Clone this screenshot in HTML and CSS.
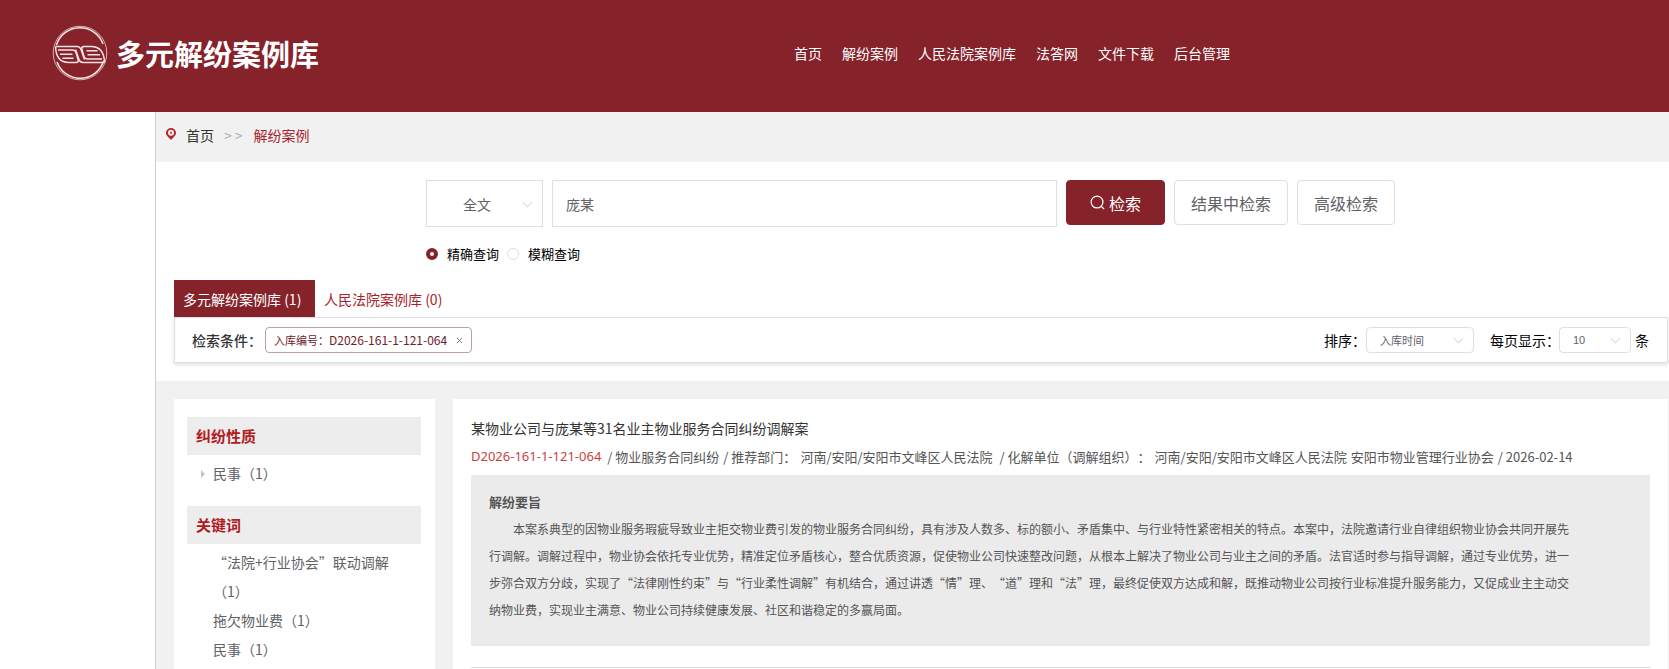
FILE: index.html
```html
<!DOCTYPE html>
<html lang="zh-CN">
<head>
<meta charset="utf-8">
<title>多元解纷案例库</title>
<link rel="stylesheet" href="styles.css">
</head>
<body>
<header class="site-header">
  <a class="brand" href="#">
    <svg class="brand-logo" viewBox="0 0 56 56" fill="none" stroke="#f7e4e4" aria-hidden="true">
      <circle cx="28" cy="28" r="26.800" stroke-width=".9" opacity=".8"/>
      <path d="M4.500 20A24.500 24.500 0 0 1 51 19M5 37A24.500 24.500 0 0 0 51.500 36" stroke-width="1.600"/>
      <g id="wing" stroke-width="1.500">
        <path d="M3.500 21.500H25Q28 21.500 29 24.500L32.500 34.500"/>
        <path d="M3.500 21.500Q4 37.500 17 37.500H24Q27 37.500 26 34.500L24 27.500Q23 25 20.500 25H6"/>
        <path d="M8 29.200H20.500M10.500 33.300H21.500"/>
      </g>
      <g stroke-width="1.500" transform="rotate(180 28 29.500)">
        <path d="M3.500 21.500H25Q28 21.500 29 24.500L32.500 34.500"/>
        <path d="M3.500 21.500Q4 37.500 17 37.500H24Q27 37.500 26 34.500L24 27.500Q23 25 20.500 25H6"/>
        <path d="M8 29.200H20.500M10.500 33.300H21.500"/>
      </g>
    </svg>
    <span class="brand-name">多元解纷案例库</span>
  </a>
  <nav class="main-nav">
    <a href="#">首页</a>
    <a href="#">解纷案例</a>
    <a href="#">人民法院案例库</a>
    <a href="#">法答网</a>
    <a href="#">文件下载</a>
    <a href="#">后台管理</a>
  </nav>
</header>

<main class="page">
  <nav class="breadcrumb" aria-label="面包屑">
    <svg class="pin" viewBox="0 0 10 12" aria-hidden="true"><path fill="#b8242a" fill-rule="evenodd" d="M5 0a5 5 0 0 1 5 5c0 2.700-3 4.600-5 7C3 9.600 0 7.700 0 5a5 5 0 0 1 5-5zm0 1.800a3 3 0 1 0 0 6 3 3 0 0 0 0-6z"/><circle cx="5" cy="4.800" r="1" fill="#b8242a"/></svg>
    <a href="#">首页</a>
    <span class="crumb-sep">&gt;&gt;</span>
    <a class="crumb-current" href="#">解纷案例</a>
  </nav>

  <section class="search-area">
    <form class="search-form">
      <div class="search-row">
        <span class="select-wrap scope">
          <select aria-label="检索范围"><option>全文</option></select>
          <svg class="chevron" viewBox="0 0 12 8" aria-hidden="true"><path d="M1 1l5 5 5-5"/></svg>
        </span>
        <input class="keyword" type="text" value="庞某" aria-label="关键字">
        <button class="btn btn-primary" type="button">
          <svg class="search-icon" viewBox="0 0 16 16" fill="none" stroke="#fff" stroke-width="1.300" aria-hidden="true"><circle cx="7.500" cy="7.500" r="6.300"/><path d="M11.800 12L15 15"/></svg>
          检索
        </button>
        <button class="btn" type="button">结果中检索</button>
        <button class="btn" type="button">高级检索</button>
      </div>
      <div class="mode-row">
        <label><input type="radio" name="mode" checked>精确查询</label>
        <label><input type="radio" name="mode">模糊查询</label>
      </div>
    </form>

    <div class="tabs">
      <button class="tab tab-active" type="button">多元解纷案例库 (1)</button>
      <button class="tab" type="button">人民法院案例库 (0)</button>
    </div>
    <div class="filter-bar">
      <span class="filter-label">检索条件：</span>
      <span class="tag">入库编号：<span class="tag-code">D2026-161-1-121-064</span>
        <button class="tag-close" type="button" aria-label="移除条件"><svg viewBox="0 0 8 8" aria-hidden="true"><path d="M1 1l6 6M7 1L1 7"/></svg></button>
      </span>
      <div class="sort-tools">
        <label for="sort">排序：</label>
        <span class="select-wrap small sort">
          <select id="sort"><option>入库时间</option></select>
          <svg class="chevron" viewBox="0 0 12 8" aria-hidden="true"><path d="M1 1l5 5 5-5"/></svg>
        </span>
        <label class="size-label" for="size">每页显示：</label>
        <span class="select-wrap small size">
          <select id="size"><option>10</option></select>
          <svg class="chevron" viewBox="0 0 12 8" aria-hidden="true"><path d="M1 1l5 5 5-5"/></svg>
        </span>
        <span class="unit">条</span>
      </div>
    </div>
  </section>

  <div class="results">
    <aside class="facets">
      <section>
        <h2>纠纷性质</h2>
        <ul>
          <li class="expandable"><a href="#">民事（1）</a></li>
        </ul>
      </section>
      <section>
        <h2>关键词</h2>
        <ul>
          <li><a href="#">“法院+行业协会”联动调解（1）</a></li>
          <li><a href="#">拖欠物业费（1）</a></li>
          <li><a href="#">民事（1）</a></li>
        </ul>
      </section>
    </aside>

    <section class="case-list">
      <article class="case">
        <h3><a href="#">某物业公司与庞某等31名业主物业服务合同纠纷调解案</a></h3>
        <p class="meta">
          <span class="case-no">D2026-161-1-121-064</span>
          <span>/ 物业服务合同纠纷</span>
          <span>/ 推荐部门：</span>
          <span class="org">河南/安阳/安阳市文峰区人民法院</span>
          <span>/ 化解单位（调解组织）：</span>
          <span>河南/安阳/安阳市文峰区人民法院</span>
          <span>安阳市物业管理行业协会</span>
          <span>/ 2026-02-14</span>
        </p>
        <div class="summary">
          <h4>解纷要旨</h4>
          <p>本案系典型的因物业服务瑕疵导致业主拒交物业费引发的物业服务合同纠纷，具有涉及人数多、标的额小、矛盾集中、与行业特性紧密相关的特点。本案中，法院邀请行业自律组织物业协会共同开展先行调解。调解过程中，物业协会依托专业优势，精准定位矛盾核心，整合优质资源，促使物业公司快速整改问题，从根本上解决了物业公司与业主之间的矛盾。法官适时参与指导调解，通过专业优势，进一步弥合双方分歧，实现了“法律刚性约束”与“行业柔性调解”有机结合，通过讲透“情”理、“道”理和“法”理，最终促使双方达成和解，既推动物业公司按行业标准提升服务能力，又促成业主主动交纳物业费，实现业主满意、物业公司持续健康发展、社区和谐稳定的多赢局面。</p>
        </div>
      </article>
    </section>
  </div>
</main>
</body>
</html>
```

FILE: styles.css
```css
* { box-sizing: border-box; }

body {
  margin: 0;
  min-height: 100vh;
  display: flex;
  flex-direction: column;
  background: #fff;
  color: #333;
  font: 14px/20px "Noto Sans CJK SC", "Noto Sans", sans-serif;
  text-spacing-trim: space-all;
}

a { color: inherit; text-decoration: none; }
h2, h3, h4, p, ul { margin: 0; padding: 0; }
ul { list-style: none; }
button, input, select { font-family: inherit; margin: 0; }

/* Header */
.site-header {
  display: flex;
  align-items: center;
  height: 112px;
  padding: 0 52px 6px;
  background: #85222a;
  color: #fff;
}
.brand { display: flex; align-items: center; gap: 8px; flex: 0 0 742px; }
.brand-logo { width: 56px; height: 56px; }
.brand-name { font-size: 29px; line-height: 40px; font-weight: 700; }
.main-nav { display: flex; gap: 20px; white-space: nowrap; }

/* Page frame */
.page {
  flex: 1;
  display: flex;
  flex-direction: column;
  margin-left: 155px;
  border-left: 1px solid #d0d0d0;
  background: #f1f1f1;
}

.breadcrumb {
  display: flex;
  align-items: center;
  height: 50px;
  padding: 0 10px 4px;
}
.pin { width: 10px; height: 12px; margin: 0 10px 2px 0; }
.crumb-sep { margin: 0 8px 0 10px; color: #aaa; letter-spacing: 3px; }
.crumb-current { color: #a8232b; }

/* Search */
.search-area { padding: 18px 0 18px 18px; background: #fff; }
.search-form { padding-left: 252px; }
.search-row { display: flex; align-items: flex-start; gap: 9px; }

.select-wrap { position: relative; display: block; }
.select-wrap select {
  appearance: none;
  width: 100%;
  height: 100%;
  border: 1px solid #dcdfe6;
  background: #fff;
  color: #606266;
}
.chevron {
  position: absolute;
  right: 10px;
  top: 50%;
  width: 11px;
  height: 8px;
  margin-top: -3px;
  fill: none;
  stroke: #c0c4cc;
  pointer-events: none;
}
.scope { width: 117px; height: 47px; }
.scope select { padding: 0 36px; font-size: 14px; }

.keyword {
  width: 505px;
  height: 47px;
  padding: 0 13px;
  border: 1px solid #dcdfe6;
  color: #606266;
  font-size: 14px;
}
.btn {
  display: flex;
  align-items: center;
  justify-content: center;
  gap: 4px;
  height: 45px;
  padding: 0 16px;
  border: 1px solid #dcdfe6;
  border-radius: 4px;
  background: #fff;
  color: #606266;
  font-size: 16px;
}
.btn-primary { padding: 0 23px; border-color: #85222a; background: #85222a; color: #fff; }
.search-icon { width: 15px; height: 15px; }

.mode-row { display: flex; gap: 8px; margin-top: 17px; font-size: 13px; color: #000; }
.mode-row label { display: flex; align-items: center; gap: 9px; }
.mode-row input {
  appearance: none;
  width: 12px;
  height: 12px;
  border: 1px solid #dcdfe6;
  border-radius: 50%;
  background: #fff;
}
.mode-row input:checked { border: 4px solid #85222a; }

/* Tabs and filters */
.tabs { display: flex; margin-top: 16px; }
.tab {
  min-width: 141px;
  height: 37px;
  padding: 0 9px;
  border: 0;
  background: none;
  color: #a8232b;
  font-size: 14px;
  text-align: left;
}
.tab-active { background: #85222a; color: #fff; }

.filter-bar {
  display: flex;
  align-items: center;
  height: 46px;
  margin-right: 1px;
  padding: 0 18px 0 17px;
  border: 1px solid #dcdfe6;
  box-shadow: 0 2px 4px rgba(0, 0, 0, .12);
}
.filter-label { width: 73px; font-weight: 500; white-space: nowrap; }
.tag {
  display: flex;
  align-items: center;
  height: 26px;
  padding: 0 8px;
  border: 1px solid #b8a0a4;
  border-radius: 4px;
  color: #6d2229;
  font-size: 11px;
}
.tag-code { font-size: 12px; }
.tag-close { display: flex; margin-left: 9px; padding: 0; border: 0; background: none; }
.tag-close svg { width: 7px; height: 7px; stroke: #806468; }

.sort-tools { display: flex; align-items: center; margin-left: auto; color: #000; white-space: nowrap; }
.sort-tools label { width: 42px; }
.sort-tools .size-label { width: 69px; margin-left: 16px; }
.small { height: 26px; }
.small select { padding: 0 13px; border-radius: 4px; font-size: 11px; }
.sort { width: 108px; }
.size { width: 72px; }
.size select { font-family: "Liberation Sans", sans-serif; font-size: 11px; }
.unit { margin-left: 4px; }

/* Results */
.results { flex: 1; display: flex; gap: 18px; padding: 18px 1px 0 18px; }

.facets { flex: 0 0 261px; padding: 18px 14px 0 13px; background: #fff; }
.facets section { margin-bottom: 18px; }
.facets section:last-child { margin-bottom: 0; }
.facets h2 {
  margin-bottom: 4px;
  padding: 0 9px;
  background: #ededed;
  color: #b01c22;
  font-size: 15px;
  line-height: 38px;
  font-weight: 700;
}
.facets ul { padding: 0 26px; color: #606266; line-height: 29px; }
.expandable { position: relative; }
.expandable::before {
  content: "";
  position: absolute;
  left: -12px;
  top: 11px;
  border: 4px solid transparent;
  border-left-color: #c0c4cc;
  border-right-width: 0;
}

.case-list { flex: 1; min-width: 0; padding: 18px 18px 0; background: #fff; }
.case { border-bottom: 1px solid #ddd; padding-bottom: 21px; }
.case h3 { font-size: 14px; line-height: 22px; font-weight: 400; }
.meta {
  display: flex;
  gap: 4px;
  margin: 6px 0 7px;
  color: #555;
  font-size: 13px;
  line-height: 23px;
  white-space: nowrap;
}
.case-no { margin-right: 2px; color: #c9423f; font-family: "Noto Sans", sans-serif; }
.org { margin-right: 3px; }
.summary { padding: 13px 18px 23px; background: #ebebeb; color: #555; line-height: 27px; }
.summary h4 { font-size: 13px; font-weight: 700; }
.summary p { max-width: 90em; font-size: 12px; text-indent: 2em; }
```
